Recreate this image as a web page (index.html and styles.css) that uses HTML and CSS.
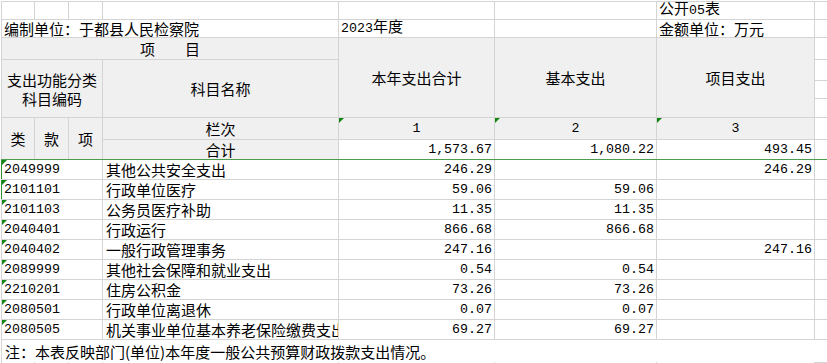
FILE: index.html
```html
<!DOCTYPE html>
<html lang="zh-CN">
<head>
<meta charset="utf-8">
<title>公开05表</title>
<link rel="stylesheet" href="styles.css">
</head>
<body>
<div class="sheet">
  <!-- row 1 -->
  <div class="c"></div><div class="c"></div><div class="c"></div><div class="c"></div>
  <div class="c"></div><div class="c"></div>
  <div class="c low"><span class="t">公开<span class="num">05</span>表</span></div>
  <div class="c"></div>
  <!-- row 2 -->
  <div class="c s4 low"><span class="t">编制单位：于都县人民检察院</span></div>
  <div class="c low"><span class="t"><span class="num">2023</span>年度</span></div>
  <div class="c"></div>
  <div class="c low"><span class="t">金额单位：万元</span></div>
  <div class="c"></div>
  <!-- row 3 -->
  <div class="c s4 hd">项　　目</div>
  <div class="c r4 hd">本年支出合计</div>
  <div class="c r4 hd">基本支出</div>
  <div class="c r4 hd">项目支出</div>
  <div class="c"></div>
  <!-- row 4-6 -->
  <div class="c s3 r3 hd wrap"><span class="t">支出功能分类<br>科目编码</span></div>
  <div class="c r3 hd">科目名称</div>
  <div class="c"></div>
  <div class="c"></div>
  <div class="c"></div>
  <!-- row 7 -->
  <div class="c r2 hd green">类</div>
  <div class="c r2 hd green">款</div>
  <div class="c r2 hd green">项</div>
  <div class="c hd">栏次</div>
  <div class="c hd tri num">1</div>
  <div class="c hd tri num">2</div>
  <div class="c hd tri num">3</div>
  <div class="c"></div>
  <!-- row 8 -->
  <div class="c hd green">合计</div>
  <div class="c num r green">1,573.67</div>
  <div class="c num r green">1,080.22</div>
  <div class="c num r green">493.45</div>
  <div class="c green"></div>
  <!-- data -->
  <div class="c s3 num tri sel">2049999</div><div class="c name">其他公共安全支出</div>
  <div class="c num r">246.29</div><div class="c num r"></div><div class="c num r">246.29</div><div class="c"></div>

  <div class="c s3 num tri sel">2101101</div><div class="c name">行政单位医疗</div>
  <div class="c num r">59.06</div><div class="c num r">59.06</div><div class="c num r"></div><div class="c"></div>

  <div class="c s3 num tri">2101103</div><div class="c name">公务员医疗补助</div>
  <div class="c num r">11.35</div><div class="c num r">11.35</div><div class="c num r"></div><div class="c"></div>

  <div class="c s3 num tri">2040401</div><div class="c name">行政运行</div>
  <div class="c num r">866.68</div><div class="c num r">866.68</div><div class="c num r"></div><div class="c"></div>

  <div class="c s3 num tri">2040402</div><div class="c name">一般行政管理事务</div>
  <div class="c num r">247.16</div><div class="c num r"></div><div class="c num r">247.16</div><div class="c"></div>

  <div class="c s3 num tri">2089999</div><div class="c name">其他社会保障和就业支出</div>
  <div class="c num r">0.54</div><div class="c num r">0.54</div><div class="c num r"></div><div class="c"></div>

  <div class="c s3 num tri">2210201</div><div class="c name">住房公积金</div>
  <div class="c num r">73.26</div><div class="c num r">73.26</div><div class="c num r"></div><div class="c"></div>

  <div class="c s3 num tri">2080501</div><div class="c name">行政单位离退休</div>
  <div class="c num r">0.07</div><div class="c num r">0.07</div><div class="c num r"></div><div class="c"></div>

  <div class="c s3 num tri">2080505</div><div class="c name">机关事业单位基本养老保险缴费支出</div>
  <div class="c num r">69.27</div><div class="c num r">69.27</div><div class="c num r"></div><div class="c"></div>
  <!-- note -->
  <div class="c s8 note"><span class="t">注：本表反映部门(单位)本年度一般公共预算财政拨款支出情况。</span></div>
  <!-- last row -->
  <div class="c up"></div><div class="c up"></div><div class="c up"></div><div class="c up"></div>
  <div class="c up"></div><div class="c up"></div><div class="c up"></div><div class="c"></div>
</div>
</body>
</html>
```
FILE: styles.css
```css
html, body {
  margin: 0;
  padding: 0;
  overflow: hidden;
  background: #ffffff;
}

body {
  font-family: "Noto Sans CJK SC", "Noto Sans", sans-serif;
  font-size: 15px;
  color: #000000;
}

.sheet {
  display: grid;
  grid-template-columns: 32px 33px 33px 235px 155px 161px 157px 40px;
  grid-template-rows: 17px 17px 21px 20px 17px 18px 21px 19px repeat(9, 19px) 22px 20px;
  gap: 1px;
  padding: 1px;
  margin: 1px 0 0 1px;
  width: max-content;
  background: #d4d4d4;
}

.c {
  position: relative;
  display: flex;
  align-items: center;
  padding: 0 2px;
  background: #ffffff;
  white-space: nowrap;
  overflow: hidden;
  line-height: 16px;
}

.t {
  display: block;
}

.s3 { grid-column: span 3; }
.s4 { grid-column: span 4; }
.s8 { grid-column: span 8; }
.r2 { grid-row: span 2; }
.r3 { grid-row: span 3; }
.r4 { grid-row: span 4; }

.low {
  align-items: flex-end;
  overflow: visible;
}

.hd {
  background: #f0f0f0;
  justify-content: center;
  text-align: center;
}

.wrap {
  line-height: 19px;
}

.name {
  padding-left: 3px;
}

.num {
  font-family: "Liberation Mono", "DejaVu Sans Mono", monospace;
  font-size: 13.3px;
}

.r {
  justify-content: flex-end;
  padding-right: 2px;
}

.green {
  overflow: visible;
}

.green::after {
  content: "";
  position: absolute;
  left: -1px;
  right: -1px;
  bottom: -1px;
  height: 1px;
  background: #4e9d4e;
}

.tri::before {
  content: "";
  position: absolute;
  top: 0;
  left: 0;
  width: 0;
  height: 0;
  border-top: 5px solid #138513;
  border-right: 5px solid transparent;
}

.sel {
  box-shadow: -1px 0 0 0 #2f8f2f;
  overflow: visible;
}

.note {
  padding-left: 3px;
  padding-top: 2px;
}

.up {
  margin-top: -1px;
}
```
